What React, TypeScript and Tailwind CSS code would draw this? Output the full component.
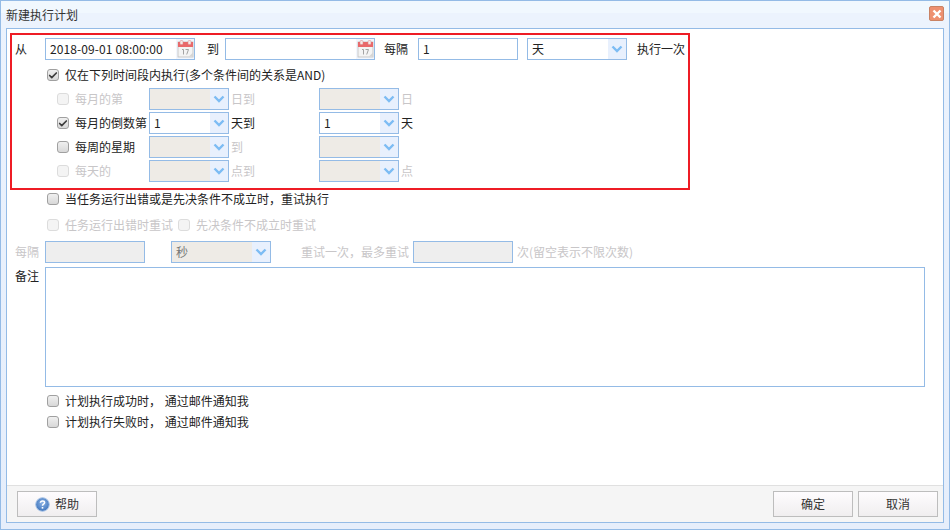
import type { ReactNode } from "react";
import { Check } from "lucide-react";

const border = "border border-[#94bbe6]";
const muted = "text-[#c8c6c8]";

function CalendarIcon() {
  return (
    <svg width="17" height="18" viewBox="0 0 17 18" aria-hidden>
      <rect x="1" y="2" width="15" height="15" fill="#f4f4f4" stroke="#c9c9c9" />
      <rect x="1" y="2" width="15" height="5" fill="#e9686a" />
      <rect x="3" y="0.5" width="3" height="4" rx="1" fill="#f6e6e6" stroke="#d98a8a" strokeWidth="0.5" />
      <rect x="11" y="0.5" width="3" height="4" rx="1" fill="#f6e6e6" stroke="#d98a8a" strokeWidth="0.5" />
      <path d="M5 9.5h1.5v5M8.5 9.5h3l-1.8 5" fill="none" stroke="#9a9a9a" strokeWidth="0.9" />
      <path d="M12 16.5l4-4v4z" fill="#d5d5d5" />
    </svg>
  );
}

function Chevron() {
  return (
    <svg width="12" height="8" viewBox="0 0 12 8" aria-hidden>
      <path d="M1.5 1.5 6 6l4.5-4.5" fill="none" stroke="#7cbcf4" strokeWidth="2.4" />
    </svg>
  );
}

function DateField({ value }: { value?: string }) {
  return (
    <div className={`flex h-[22px] w-[150px] items-center justify-between bg-white ${border}`}>
      <span className="pl-[4px] tracking-[0.1px] text-[#222]">{value}</span>
      <span className="flex h-full w-[18px] items-center justify-center bg-[#f2f6fd]">
        <CalendarIcon />
      </span>
    </div>
  );
}

function Select({
  value,
  width = "w-[80px]",
  disabled,
  textClass = "text-[#222]",
}: {
  value?: string;
  width?: string;
  disabled?: boolean;
  textClass?: string;
}) {
  return (
    <div className={`flex h-[22px] shrink-0 items-center justify-between ${width} ${border} ${disabled ? "bg-[#eeebe6]" : "bg-white"}`}>
      <span className={`pl-[4px] ${textClass}`}>{value}</span>
      <span className="flex h-full w-[18px] items-center justify-center bg-[#e8f0fd]">
        <Chevron />
      </span>
    </div>
  );
}

function TextBox({ value, width, disabled }: { value?: string; width: string; disabled?: boolean }) {
  return (
    <div className={`flex h-[22px] shrink-0 items-center pl-[4px] text-[#222] ${width} ${border} ${disabled ? "bg-[#eeeeee]" : "bg-white"}`}>
      {value}
    </div>
  );
}

function CheckBox({ checked, disabled }: { checked?: boolean; disabled?: boolean }) {
  return (
    <span
      className={`flex h-[12px] w-[12px] shrink-0 items-center justify-center rounded-[3px] border ${
        disabled
          ? "border-[#dcdcdc] bg-[#f4f4f4]"
          : "border-[#a0a0a0] bg-gradient-to-b from-[#f0f0f0] to-[#d8d8d8]"
      }`}
    >
      {checked && <Check size={11} strokeWidth={4} className="text-[#3c3c3c]" />}
    </span>
  );
}

function CheckLabel({
  children,
  checked,
  disabled,
  className = "",
}: {
  children: ReactNode;
  checked?: boolean;
  disabled?: boolean;
  className?: string;
}) {
  return (
    <div className={`flex items-center ${className}`}>
      <CheckBox checked={checked} disabled={disabled} />
      <span className={`ml-[6px] whitespace-nowrap ${disabled ? muted : "text-[#222]"}`}>{children}</span>
    </div>
  );
}

function SubRow({
  label,
  unit1,
  unit2,
  checked,
  checkDisabled,
  active,
  selectValue,
}: {
  label: string;
  unit1: string;
  unit2?: string;
  checked?: boolean;
  checkDisabled?: boolean;
  active?: boolean;
  selectValue?: string;
}) {
  return (
    <div className="flex h-[22px] items-center">
      <CheckLabel checked={checked} disabled={checkDisabled} className="ml-[45px] w-[92px] shrink-0">
        {label}
      </CheckLabel>
      <Select value={selectValue} disabled={!active} />
      <span className={`ml-[2px] w-[88px] shrink-0 whitespace-nowrap ${active ? "text-[#222]" : muted}`}>{unit1}</span>
      <Select value={selectValue} disabled={!active} />
      <span className={`ml-[2px] whitespace-nowrap ${active ? "text-[#222]" : muted}`}>{unit2}</span>
    </div>
  );
}

function FooterButton({ children, icon }: { children: ReactNode; icon?: ReactNode }) {
  return (
    <button
      type="button"
      className="flex h-[26px] w-[80px] items-center justify-center border border-[#bdbdbd] bg-gradient-to-b from-[#fefcfe] to-[#f0eeef] text-[#333]"
    >
      {icon}
      {children}
    </button>
  );
}

function HelpIcon() {
  return (
    <svg width="15" height="15" viewBox="0 0 15 15" className="mr-[5px]" aria-hidden>
      <defs>
        <radialGradient id="helpFill" cx="50%" cy="40%" r="60%">
          <stop offset="0%" stopColor="#8db4e6" />
          <stop offset="100%" stopColor="#3f74bb" />
        </radialGradient>
      </defs>
      <circle cx="7.5" cy="7.5" r="6.8" fill="url(#helpFill)" stroke="#a9c4e6" />
      <path d="M5.4 5.8c.1-1.3 1-1.9 2.2-1.9s2 .7 2 1.7c0 1.6-2.1 1.5-2.1 3.1" fill="none" stroke="#fff" strokeWidth="1.5" />
      <rect x="6.7" y="10" width="1.6" height="1.6" fill="#fff" />
    </svg>
  );
}

export default function App() {
  return (
    <div
      className="flex h-[530px] w-[950px] flex-col overflow-hidden border border-[#94bbe6] bg-gradient-to-b from-[#ecf3fd] to-[#e6eefb] text-[12px] leading-none"
      style={{ fontFamily: '"Noto Sans CJK SC", "Noto Sans", sans-serif' }}
    >
      <div className="flex h-[27px] shrink-0 items-center justify-between bg-[linear-gradient(#f1f8fe_45%,#ecf3fd_45%)] pl-[5px] pr-[5px]">
        <span className="text-[#333]">新建执行计划</span>
        <span className="mb-[2px] flex h-[15px] w-[15px] items-center justify-center rounded-[2px] border border-[#c98264] bg-[#ee9070]">
          <svg width="10" height="10" viewBox="0 0 10 10" aria-hidden>
            <path d="M1.5 1.5l7 7M8.5 1.5l-7 7" stroke="#fff" strokeWidth="2.4" />
          </svg>
        </span>
      </div>

      <div className="mx-[5px] mb-[6px] flex flex-1 flex-col border border-[#94bbe6] bg-white">
        <div className="flex-1">
          <div className="ml-[3px] mt-[4px] h-[157px] w-[680px] border-2 border-[#ee1c25] pt-[3px]">
            <div className="flex h-[22px] items-center">
              <span className="ml-[3px] w-[30px] shrink-0 text-[#222]">从</span>
              <DateField value="2018-09-01 08:00:00" />
              <span className="ml-[12px] w-[18px] shrink-0 text-[#222]">到</span>
              <DateField />
              <span className="ml-[9px] w-[34px] shrink-0 text-[#222]">每隔</span>
              <TextBox value="1" width="w-[100px]" />
              <div className="ml-[9px]">
                <Select value="天" width="w-[100px]" />
              </div>
              <span className="ml-[10px] whitespace-nowrap text-[#222]">执行一次</span>
            </div>
            <CheckLabel checked className="ml-[35px] mt-[9px] h-[12px]">
              仅在下列时间段内执行(多个条件间的关系是AND)
            </CheckLabel>
            <div className="mt-[7px] flex flex-col gap-[2px]">
              <SubRow label="每月的第" unit1="日到" unit2="日" checkDisabled />
              <SubRow label="每月的倒数第" unit1="天到" unit2="天" checked active selectValue="1" />
              <SubRow label="每周的星期" unit1="到" />
              <SubRow label="每天的" unit1="点到" unit2="点" checkDisabled />
            </div>
          </div>

          <CheckLabel className="ml-[40px] mt-[3px] h-[12px]">当任务运行出错或是先决条件不成立时，重试执行</CheckLabel>

          <div className="ml-[40px] mt-[14px] flex h-[12px] items-center">
            <CheckLabel disabled>任务运行出错时重试</CheckLabel>
            <CheckLabel disabled className="ml-[5px]">
              先决条件不成立时重试
            </CheckLabel>
          </div>

          <div className="mt-[10px] flex h-[22px] items-center">
            <span className={`ml-[8px] w-[30px] shrink-0 ${muted}`}>每隔</span>
            <TextBox width="w-[100px]" disabled />
            <div className="ml-[26px]">
              <Select value="秒" width="w-[100px]" disabled textClass="text-[#777]" />
            </div>
            <span className={`ml-[30px] w-[112px] shrink-0 whitespace-nowrap ${muted}`}>重试一次，最多重试</span>
            <TextBox width="w-[100px]" disabled />
            <span className={`ml-[4px] whitespace-nowrap ${muted}`}>次(留空表示不限次数)</span>
          </div>

          <div className="mt-[4px] flex">
            <span className="ml-[8px] mt-[3px] w-[30px] shrink-0 text-[#222]">备注</span>
            <div className={`h-[120px] w-[880px] bg-white ${border}`} />
          </div>

          <CheckLabel className="ml-[40px] mt-[8px] h-[12px]">
            计划执行成功时， <span className="ml-[1px]">通过邮件通知我</span>
          </CheckLabel>
          <CheckLabel className="ml-[40px] mt-[9px] h-[12px]">
            计划执行失败时， <span className="ml-[1px]">通过邮件通知我</span>
          </CheckLabel>
        </div>

        <div className="flex h-[37px] shrink-0 items-start justify-between border-t border-[#e0e0e0] bg-[#f5f5f5] pl-[10px] pr-[5px] pt-[5px]">
          <FooterButton icon={<HelpIcon />}>帮助</FooterButton>
          <div className="flex gap-[5px]">
            <FooterButton>确定</FooterButton>
            <FooterButton>取消</FooterButton>
          </div>
        </div>
      </div>
    </div>
  );
}
